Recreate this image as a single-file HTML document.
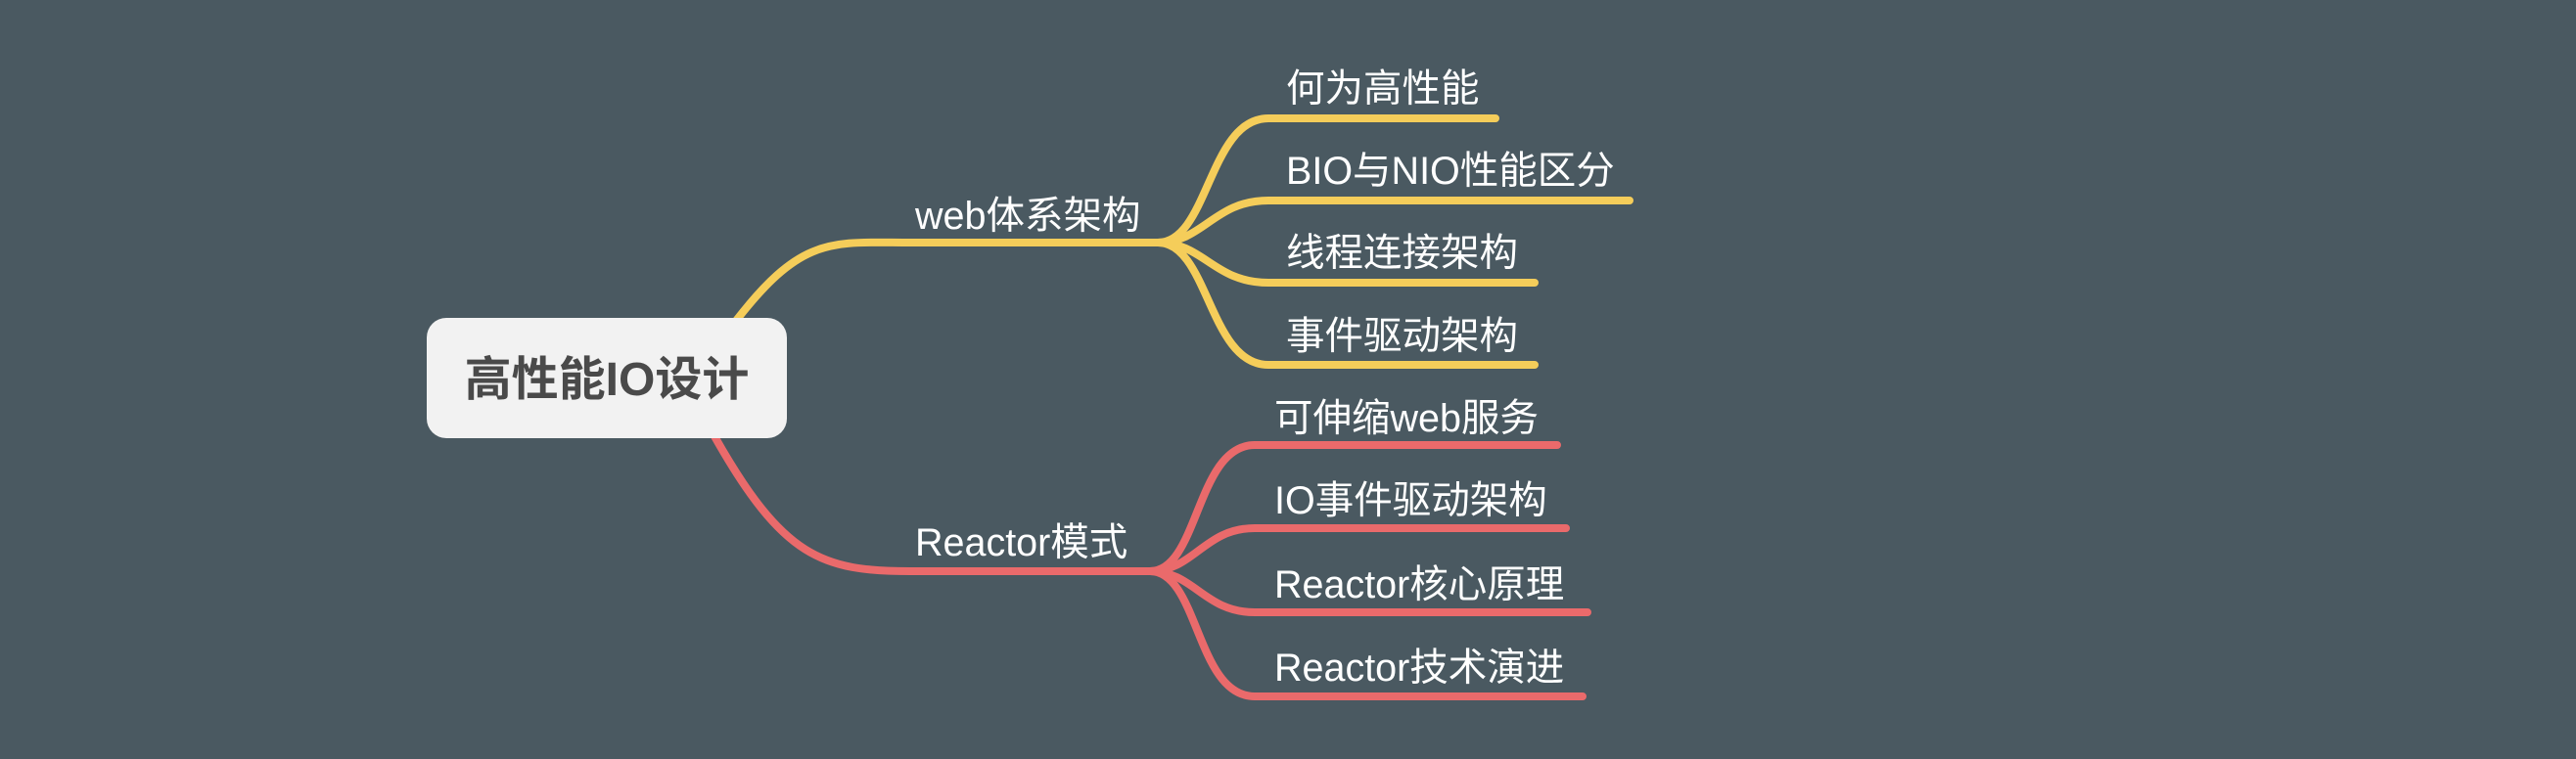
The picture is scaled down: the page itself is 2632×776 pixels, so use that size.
<!DOCTYPE html>
<html><head><meta charset="utf-8"><style>
html,body{margin:0;padding:0;background:#4a5961;}
svg{display:block}
text{font-family:"Liberation Sans","Noto Sans CJK SC",sans-serif;}
</style></head><body>
<svg width="2632" height="776" viewBox="0 0 2632 776" xmlns="http://www.w3.org/2000/svg">
<rect width="2632" height="776" fill="#4a5961"/>
<g fill="none" stroke="#f5cd5a" stroke-width="8" stroke-linecap="round">
<path d="M752,328 C820,240 850,248 930,248 H1183"/>
<path d="M1183,248 C1235,248 1235,121 1296,121 H1528"/>
<path d="M1183,248 C1230,248 1240,205 1296,205 H1665"/>
<path d="M1183,248 C1230,248 1240,289 1296,289 H1568"/>
<path d="M1183,248 C1235,248 1235,373 1296,373 H1568"/>
</g>
<g fill="none" stroke="#ea6a6b" stroke-width="8" stroke-linecap="round">
<path d="M730,446 C800,570 840,584 930,584 H1175"/>
<path d="M1175,584 C1225,584 1222,455 1282,455 H1591"/>
<path d="M1175,584 C1220,584 1230,540 1282,540 H1600"/>
<path d="M1175,584 C1220,584 1230,626 1282,626 H1622"/>
<path d="M1175,584 C1225,584 1222,712 1282,712 H1617"/>
</g>
<rect x="436" y="325" width="368" height="123" rx="20" fill="#f2f2f2"/>
<text x="620" y="404" font-size="48" font-weight="bold" fill="#4a4a4a" text-anchor="middle">高性能IO设计</text>
<g fill="#ffffff" font-size="39.5">
<text x="935" y="234">web体系架构</text>
<text x="1314" y="104">何为高性能</text>
<text x="1314" y="188">BIO与NIO性能区分</text>
<text x="1314" y="272">线程连接架构</text>
<text x="1314" y="357">事件驱动架构</text>
<text x="935" y="568">Reactor模式</text>
<text x="1302" y="441">可伸缩web服务</text>
<text x="1302" y="525">IO事件驱动架构</text>
<text x="1302" y="611">Reactor核心原理</text>
<text x="1302" y="696">Reactor技术演进</text>
</g>
</svg>
</body></html>
